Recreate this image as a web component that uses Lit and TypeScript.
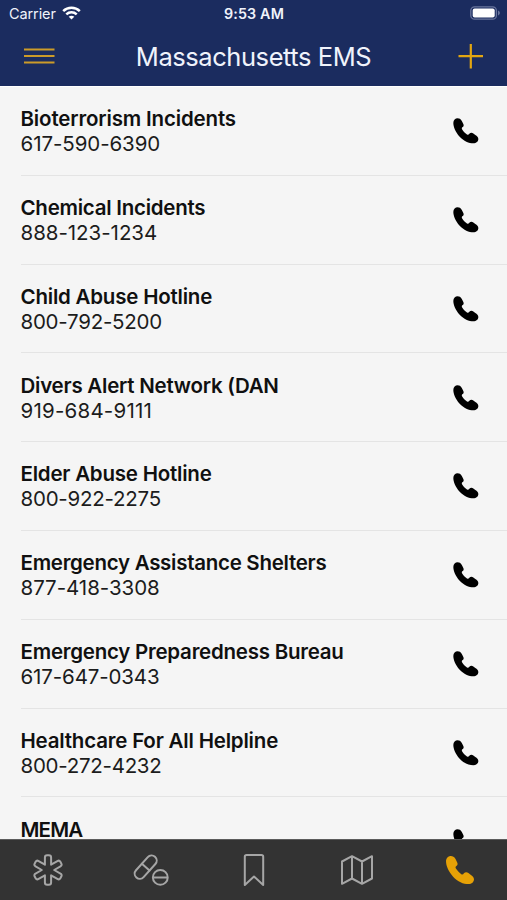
import { LitElement, html, css, svg } from "lit";
import { customElement, property } from "lit/decorators.js";

const HANDSET =
  "M84 55C77 55 71 61 71 69C71 80 77 96 90 110C102 123 118 130 131 130C140 130 146 124 146 117C146 112 142 108 137 105L131 100.500C127 97 122 98 119 101C117 104 115 105 112 103.500C107 100 102 95 98 89C96 86 96 84 98 82C102 80 103 76 101 72L96.500 63C93 57 89 55 84 55Z";

const CONTACTS: { name: string; phone: string; nameTrack: number; phoneTrack: number }[] = [
  { name: "Bioterrorism Incidents", phone: "617-590-6390", nameTrack: -0.16, phoneTrack: -0.08 },
  { name: "Chemical Incidents", phone: "888-123-1234", nameTrack: -0.25, phoneTrack: -0.04 },
  { name: "Child Abuse Hotline", phone: "800-792-5200", nameTrack: -0.21, phoneTrack: -0.25 },
  { name: "Divers Alert Network (DAN", phone: "919-684-9111", nameTrack: -0.24, phoneTrack: 0.22 },
  { name: "Elder Abuse Hotline", phone: "800-922-2275", nameTrack: -0.22, phoneTrack: -0.24 },
  { name: "Emergency Assistance Shelters", phone: "877-418-3308", nameTrack: -0.28, phoneTrack: -0.04 },
  { name: "Emergency Preparedness Bureau", phone: "617-647-0343", nameTrack: -0.24, phoneTrack: -0.13 },
  { name: "Healthcare For All Helpline", phone: "800-272-4232", nameTrack: -0.19, phoneTrack: -0.27 },
  { name: "MEMA", phone: "", nameTrack: -0.8, phoneTrack: 0 },
];

// Outline of a six-armed star of life: arm half-width a, arm length l, corner radius r.
function starPath(a: number, l: number, r: number): string {
  const parts: string[] = [];
  for (let k = 0; k < 6; k++) {
    const t = (k * Math.PI) / 3;
    const p = (x: number, y: number) =>
      `${(x * Math.cos(t) - y * Math.sin(t)).toFixed(2)} ${(x * Math.sin(t) + y * Math.cos(t)).toFixed(2)}`;
    parts.push(
      `${k ? "L" : "M"}${p(-a, -a * 1.732)}L${p(-a, r - l)}Q${p(-a, -l)} ${p(r - a, -l)}L${p(a - r, -l)}Q${p(a, -l)} ${p(a, r - l)}`
    );
  }
  return parts.join("") + "Z";
}

@customElement("status-bar")
export class StatusBar extends LitElement {
  static styles = css`
    :host { display: grid; grid-template-columns: 1fr auto 1fr; align-items: center; height: 27px; padding: 0 6px 0 9px; font-size: 14.5px; color: #f0f3fb; }
    .left { display: flex; align-items: center; gap: 6px; margin-top: -1px; }
    .carrier { letter-spacing: -0.1px; }
    .time { font-weight: 600; font-size: 14.3px; letter-spacing: 0.15px; margin-right: 2px; }
    .battery { justify-self: end; margin-top: -1px; }
    svg { display: block; }
  `;
  render() {
    return html`
      <div class="left"><span class="carrier">Carrier</span>
        <svg width="19" height="14" viewBox="0 0 19 14" fill="none" stroke="#fff" stroke-width="2.5">
          <path d="M1.2 5.1C5.8 .6 13.2 .6 17.8 5.1"/><path d="M4.3 8.4C7.2 5.6 11.8 5.6 14.7 8.4"/>
          <path d="M9.5 13.5L6.7 10.7C8.2 9.3 10.8 9.3 12.3 10.7Z" fill="#fff" stroke="none"/>
        </svg>
      </div>
      <span class="time">9:53 AM</span>
      <svg class="battery" width="31" height="14" viewBox="0 0 31 14">
        <rect x=".8" y=".8" width="25.6" height="12.4" rx="3.8" fill="none" stroke="#69759d" stroke-width="1.3"/>
        <rect x="2.7" y="2.6" width="22" height="8.8" rx="2" fill="#fff"/>
        <path d="M28 4.6C30.5 5.3 30.5 8.7 28 9.4Z" fill="#69759d"/>
      </svg>`;
  }
}

@customElement("nav-bar")
export class NavBar extends LitElement {
  static styles = css`
    :host { display: grid; grid-template-columns: 32px 1fr 32px; align-items: center; height: 58px; padding: 0 20px 0 23px; color: #f0f3fb; }
    .title { text-align: center; font-size: 25.5px; font-weight: 400; margin: 0 3px 0 0; letter-spacing: -0.44px; white-space: nowrap; }
    svg { display: block; }
  `;
  render() {
    return html`
      <svg width="32" height="20" viewBox="0 0 32 20"><path d="M1 3.5H31.5M1 10H31.5M1 16.5H31.5" stroke="#cc9b29" stroke-width="2.2"/></svg>
      <h1 class="title">Massachusetts EMS</h1>
      <svg width="32" height="26" viewBox="0 0 32 26"><path d="M3.5 13.2H28M15.8 1V25.4" stroke="#e3a611" stroke-width="2.2"/></svg>`;
  }
}

@customElement("contact-row")
export class ContactRow extends LitElement {
  @property() name = "";
  @property() phone = "";
  @property({ type: Number }) nameTrack = 0;
  @property({ type: Number }) phoneTrack = 0;
  static styles = css`
    :host { display: flex; justify-content: space-between; box-sizing: border-box; height: 88.8px; flex: none; margin-left: 20.5px; padding: 19.2px 28px 0 0; border-bottom: 1.5px solid #e4e4e4; color: #101010; }
    .name, .phone { font-size: 20.5px; line-height: 25px; white-space: nowrap; }
    .name { font-weight: 600; }
    .phone { color: #1c1c1c; }
    .call { display: block; margin-top: 12px; }
  `;
  render() {
    return html`
      <div>
        <div class="name" style="letter-spacing:${this.nameTrack}px">${this.name}</div>
        <div class="phone" style="letter-spacing:${this.phoneTrack}px">${this.phone}</div>
      </div>
      <svg class="call" width="26" height="26" viewBox="70 54 78 78"><path fill="#000" d=${HANDSET} /></svg>`;
  }
}

@customElement("tab-bar")
export class TabBar extends LitElement {
  static styles = css`
    :host { display: grid; grid-template-columns: repeat(5, 103px); justify-content: center; box-sizing: border-box; height: 61.5px; flex: none; background: #333; border-top: 1px solid #5c5c5c; }
    .tab { display: flex; justify-content: center; align-items: center; }
    svg { display: block; fill: none; stroke: #a6a6a6; stroke-width: 2; stroke-linejoin: round; stroke-linecap: round; }
    .active { fill: #e6a106; stroke: none; }
  `;
  render() {
    const icons = [
      svg`<path d=${starPath(3.1, 14.8, 2.2)} />`,
      svg`<g transform="translate(-5.3 -2.9) rotate(42)"><rect x="-5.1" y="-13.9" width="10.2" height="27.8" rx="5.1"/><path d="M-5.1 0H5.1"/></g><circle cx="9.3" cy="7.4" r="7.4"/><path d="M3 7.4H16"/>`,
      svg`<path d="M-9.2 15V-13.2Q-9.2 -15 -7.4 -15H7.4Q9.2 -15 9.2 -13.2V15L0 6.5Z"/>`,
      svg`<path d="M-15 -8.5L-5 -13.8L5 -8.5L15 -13.8V8.5L5 13.8L-5 8.5L-15 13.8ZM-5 -13.8V8.5M5 -8.5V13.8"/>`,
      svg`<g class="active" transform="translate(0 .1) scale(.373) translate(-108.5 -92.5)"><path d=${HANDSET} /></g>`,
    ];
    return icons.map(
      (icon) => html`<div class="tab"><svg width="40" height="36" viewBox="-20 -18 40 36">${icon}</svg></div>`
    );
  }
}

@customElement("app-root")
export class AppRoot extends LitElement {
  static styles = css`
    :host { display: flex; flex-direction: column; height: 900px; overflow: hidden; background: #f5f5f5; font-family: Inter, "Liberation Sans", sans-serif; }
    .header { flex: none; background: #1b2c5f; height: 86px; border-bottom: 1px solid #fff; }
    .list { flex: 1; min-height: 0; overflow: hidden; display: flex; flex-direction: column; }
  `;
  render() {
    return html`
      <div class="header"><status-bar></status-bar><nav-bar></nav-bar></div>
      <div class="list">
        ${CONTACTS.map(
          (c) => html`<contact-row .name=${c.name} .phone=${c.phone} .nameTrack=${c.nameTrack} .phoneTrack=${c.phoneTrack}></contact-row>`
        )}
      </div>
      <tab-bar></tab-bar>`;
  }
}
